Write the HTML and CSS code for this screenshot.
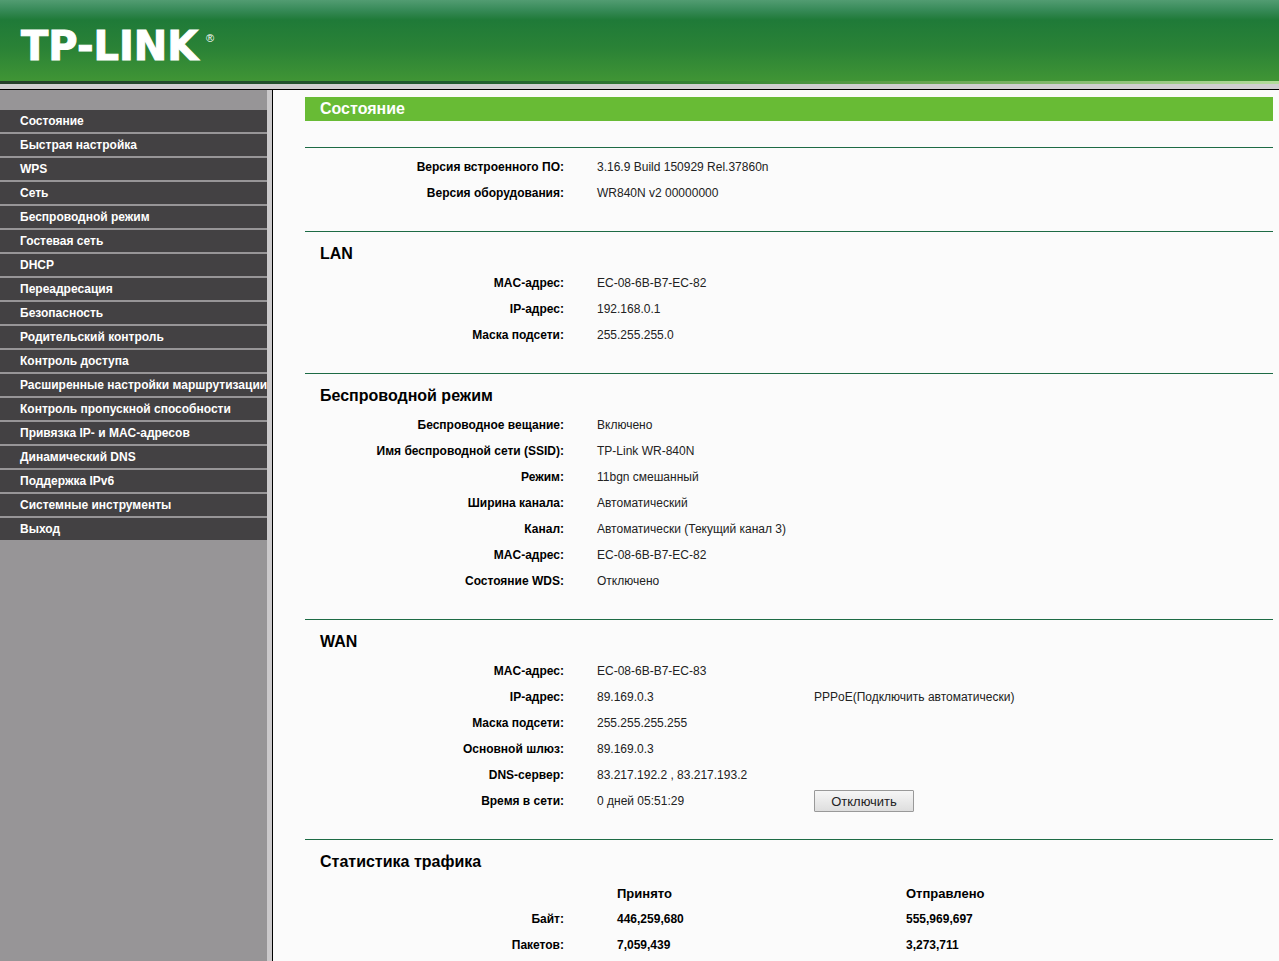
FILE: index.html
```html
<!DOCTYPE html>
<html lang="ru">
<head>
<meta charset="utf-8">
<title>TP-LINK – Состояние</title>
<link rel="stylesheet" href="styles.css">
</head>
<body>
<header class="banner">
  <svg class="logo" width="220" height="81" role="img" aria-label="TP-LINK">
    <text class="logo-name" x="21" y="60">TP-LINK</text>
    <text class="logo-mark" x="206" y="42">®</text>
  </svg>
</header>
<div class="layout">
  <nav class="sidebar">
    <ul class="menu">
      <li><a href="#">Состояние</a></li>
      <li><a href="#">Быстрая настройка</a></li>
      <li><a href="#">WPS</a></li>
      <li><a href="#">Сеть</a></li>
      <li><a href="#">Беспроводной режим</a></li>
      <li><a href="#">Гостевая сеть</a></li>
      <li><a href="#">DHCP</a></li>
      <li><a href="#">Переадресация</a></li>
      <li><a href="#">Безопасность</a></li>
      <li><a href="#">Родительский контроль</a></li>
      <li><a href="#">Контроль доступа</a></li>
      <li><a href="#">Расширенные настройки маршрутизации</a></li>
      <li><a href="#">Контроль пропускной способности</a></li>
      <li><a href="#">Привязка IP- и MAC-адресов</a></li>
      <li><a href="#">Динамический DNS</a></li>
      <li><a href="#">Поддержка IPv6</a></li>
      <li><a href="#">Системные инструменты</a></li>
      <li><a href="#">Выход</a></li>
    </ul>
  </nav>
  <main class="content">
    <h1 class="title">Состояние</h1>

    <section class="section section-plain">
      <table class="info">
        <colgroup><col class="col-label"><col class="col-value"><col></colgroup>
        <tr><th scope="row">Версия встроенного ПО:</th><td>3.16.9 Build 150929 Rel.37860n</td><td></td></tr>
        <tr><th scope="row">Версия оборудования:</th><td>WR840N v2 00000000</td><td></td></tr>
      </table>
    </section>

    <section class="section">
      <h2>LAN</h2>
      <table class="info">
        <colgroup><col class="col-label"><col class="col-value"><col></colgroup>
        <tr><th scope="row">MAC-адрес:</th><td>EC-08-6B-B7-EC-82</td><td></td></tr>
        <tr><th scope="row">IP-адрес:</th><td>192.168.0.1</td><td></td></tr>
        <tr><th scope="row">Маска подсети:</th><td>255.255.255.0</td><td></td></tr>
      </table>
    </section>

    <section class="section">
      <h2>Беспроводной режим</h2>
      <table class="info">
        <colgroup><col class="col-label"><col class="col-value"><col></colgroup>
        <tr><th scope="row">Беспроводное вещание:</th><td>Включено</td><td></td></tr>
        <tr><th scope="row">Имя беспроводной сети (SSID):</th><td>TP-Link WR-840N</td><td></td></tr>
        <tr><th scope="row">Режим:</th><td>11bgn смешанный</td><td></td></tr>
        <tr><th scope="row">Ширина канала:</th><td>Автоматический</td><td></td></tr>
        <tr><th scope="row">Канал:</th><td>Автоматически (Текущий канал 3)</td><td></td></tr>
        <tr><th scope="row">MAC-адрес:</th><td>EC-08-6B-B7-EC-82</td><td></td></tr>
        <tr><th scope="row">Состояние WDS:</th><td>Отключено</td><td></td></tr>
      </table>
    </section>

    <section class="section">
      <h2>WAN</h2>
      <table class="info">
        <colgroup><col class="col-label"><col class="col-value"><col></colgroup>
        <tr><th scope="row">MAC-адрес:</th><td>EC-08-6B-B7-EC-83</td><td></td></tr>
        <tr><th scope="row">IP-адрес:</th><td>89.169.0.3</td><td>PPPoE(Подключить автоматически)</td></tr>
        <tr><th scope="row">Маска подсети:</th><td>255.255.255.255</td><td></td></tr>
        <tr><th scope="row">Основной шлюз:</th><td>89.169.0.3</td><td></td></tr>
        <tr><th scope="row">DNS-сервер:</th><td>83.217.192.2 , 83.217.193.2</td><td></td></tr>
        <tr><th scope="row">Время в сети:</th><td>0 дней 05:51:29</td><td><button class="button" type="button">Отключить</button></td></tr>
      </table>
    </section>

    <section class="section">
      <h2>Статистика трафика</h2>
      <table class="info stats">
        <colgroup><col class="col-label"><col class="col-received"><col></colgroup>
        <tr class="stats-head"><td></td><th scope="col">Принято</th><th scope="col">Отправлено</th></tr>
        <tr><th scope="row">Байт:</th><td>446,259,680</td><td>555,969,697</td></tr>
        <tr><th scope="row">Пакетов:</th><td>7,059,439</td><td>3,273,711</td></tr>
      </table>
    </section>
  </main>
</div>
</body>
</html>
```
FILE: styles.css
```css
* {
  box-sizing: border-box;
}

body {
  margin: 0;
  height: 100vh;
  display: flex;
  flex-direction: column;
  overflow: hidden;
  font-family: "Liberation Sans", Arial, sans-serif;
  font-size: 12px;
  color: #000;
  background: #fbfbfb;
}

.banner {
  flex: none;
  background: linear-gradient(#529c72 0, #378a58 10px, #1f7a38 20px, #2a8236 48px, #409535 81px);
}

.banner::after {
  content: "";
  display: block;
  height: 8px;
  border-top: 0;
  border-bottom: 1px solid #000;
  background:
    linear-gradient(90deg, #263f2b 0, #1f5a2e 35%, #3a8a36 58%, #5fa04a 70%, #b4dc9c 100%) top / 100% 3px no-repeat,
    #d0ced0;
}

.logo {
  display: block;
  fill: #fff;
}

.logo-name {
  font: bold 40px "DejaVu Sans", sans-serif;
  stroke: #fff;
  stroke-width: 1px;
}

.logo-mark {
  font: 11px "Liberation Sans", sans-serif;
}

.layout {
  flex: 1;
  min-height: 0;
  display: flex;
}

.sidebar {
  flex: none;
  width: 273px;
  padding-top: 20px;
  background: #979597;
  border-right: 1px solid #000;
  box-shadow: inset -5px 0 #cbc9cb;
}

.menu {
  margin: 0 5px 0 0;
  padding: 0;
  list-style: none;
  display: flex;
  flex-direction: column;
  gap: 2px;
}

.menu a {
  display: block;
  padding-left: 20px;
  line-height: 22px;
  font-weight: bold;
  white-space: nowrap;
  color: #fff;
  text-decoration: none;
  background: #434143;
}

.content {
  flex: 1;
  min-width: 0;
  overflow: hidden;
  padding: 7px 6px 0 32px;
}

.title {
  margin: 0 0 26px;
  padding-left: 15px;
  font-size: 16px;
  line-height: 24px;
  color: #fff;
  background: #68bb35;
}

.section {
  padding-bottom: 25px;
  border-top: 1px solid #1d6b45;
}

.section-plain {
  padding-top: 6px;
}

.section h2 {
  margin: 0;
  padding: 12px 0 6px 15px;
  font-size: 16px;
  line-height: 20px;
}

.info {
  width: 100%;
  table-layout: fixed;
  border-collapse: collapse;
}

.col-label {
  width: 259px;
}

.col-value {
  width: 250px;
}

.col-received {
  width: 342px;
}

.info th,
.info td {
  height: 26px;
  padding: 0;
  text-align: left;
  white-space: nowrap;
}

.info th[scope="row"] {
  text-align: right;
}

.info td:nth-child(2) {
  padding-left: 33px;
}

.info td {
  color: #222;
}

.stats {
  margin-top: 2px;
}

.info.stats td {
  font-weight: bold;
  color: #000;
}

.stats th[scope="col"] {
  font-size: 13px;
}

.info.stats td:nth-child(2),
.info.stats th:nth-child(2) {
  padding-left: 53px;
}

.button {
  display: block;
  width: 100px;
  height: 22px;
  padding: 0;
  font-family: inherit;
  font-size: 13px;
  color: #222;
  border: 1px solid #999;
  border-radius: 1px;
  background: linear-gradient(#f6f6f6, #dedede);
}
```
